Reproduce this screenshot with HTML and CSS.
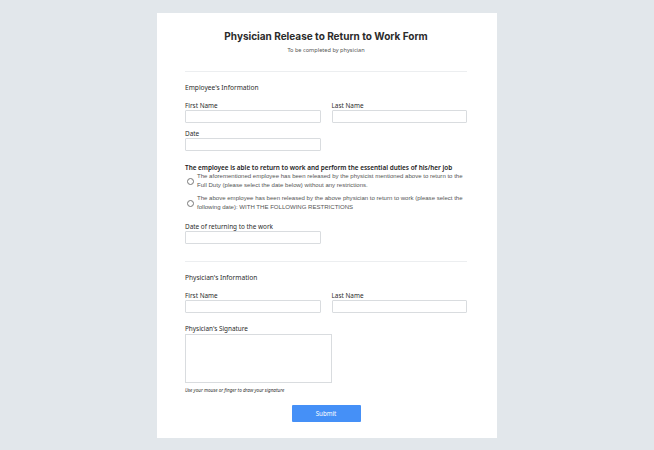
FILE: index.html
```html
<!DOCTYPE html>
<html>
<head>
<meta charset="utf-8">
<link rel="stylesheet" href="styles.css">
</head>
<body>
<div class="card">
  <div class="header">
    <h1 class="title">Physician Release to Return to Work Form</h1>
    <p class="subtitle">To be completed by physician</p>
  </div>
  <hr class="divider">
  <div class="section">
    <div class="section-title">Employee's Information</div>
    <div class="row">
      <div class="field">
        <label class="label">First Name</label>
        <div class="input"></div>
      </div>
      <div class="field">
        <label class="label">Last Name</label>
        <div class="input"></div>
      </div>
    </div>
    <div class="row">
      <div class="field">
        <label class="label">Date</label>
        <div class="input"></div>
      </div>
      <div class="field"></div>
    </div>
    <div class="question">The employee is able to return to work and perform the essential duties of his/her job</div>
    <div class="options">
      <div class="option">
        <span class="radio"></span>
        <span class="option-text">The aforementioned employee has been released by the physicist mentioned above to return to the Full Duty (please select the date below) without any restrictions.</span>
      </div>
      <div class="option">
        <span class="radio"></span>
        <span class="option-text">The above employee has been released by the above physician to return to work (please select the following date): WITH THE FOLLOWING RESTRICTIONS</span>
      </div>
    </div>
    <div class="row return-row">
      <div class="field">
        <label class="label">Date of returning to the work</label>
        <div class="input"></div>
      </div>
      <div class="field"></div>
    </div>
  </div>
  <hr class="divider second">
  <div class="section">
    <div class="section-title">Physician's Information</div>
    <div class="row">
      <div class="field">
        <label class="label">First Name</label>
        <div class="input"></div>
      </div>
      <div class="field">
        <label class="label">Last Name</label>
        <div class="input"></div>
      </div>
    </div>
    <div class="sig-field">
      <label class="label">Physician's Signature</label>
      <div class="sig-box"></div>
      <div class="hint">Use your mouse or finger to draw your signature</div>
    </div>
    <div class="actions">
      <button class="submit">Submit</button>
    </div>
  </div>
</div>
</body>
</html>
```
FILE: styles.css
```css
html, body {
  margin: 0;
  padding: 0;
}
body {
  background: #e2e7eb;
  font-family: "Noto Sans", "Liberation Sans", sans-serif;
  height: 450px;
  overflow: hidden;
}
.card {
  width: 340px;
  margin: 13px 0 0 157px;
  background: #ffffff;
  box-sizing: border-box;
  padding: 16px 30px 17px 28px;
  height: 425px;
}
.header {
  text-align: center;
}
.title {
  font-family: Inter, "Liberation Sans", sans-serif;
  font-weight: 700;
  font-size: 10px;
  color: #2b2b2b;
  margin: 0;
  line-height: 14px;
}
.subtitle {
  margin: 3px 0 0;
  font-size: 5.6px;
  color: #555;
  line-height: 8px;
}
.divider {
  border: 0;
  border-top: 1px solid #eceef0;
  margin: 17px 0 0;
}
.divider.second {
  margin-top: 17px;
}
.section-title {
  font-size: 6.6px;
  color: #2b2b2b;
  margin-top: 11px;
  line-height: 9px;
}
.row {
  display: flex;
  gap: 11px;
  margin-top: 9px;
}
.row + .row {
  margin-top: 6px;
}
.field {
  flex: 1;
  display: flex;
  flex-direction: column;
}
.label {
  font-size: 6.4px;
  color: #2b2b2b;
  line-height: 9px;
  margin-bottom: 0;
}
.input {
  height: 11px;
  border: 1px solid #d9dcdf;
  border-radius: 1px;
  background: #fff;
}
.question {
  margin-top: 12px;
  font-size: 6.4px;
  color: #222;
  font-weight: 600;
  line-height: 9px;
}
.options {
  margin-top: 0;
  display: flex;
  flex-direction: column;
  gap: 4px;
}
.option {
  display: flex;
  align-items: center;
  gap: 3px;
  padding-left: 2px;
}
.radio {
  flex: none;
  width: 5px;
  height: 5px;
  border: 1px solid #777;
  border-radius: 50%;
}
.option-text {
  font-family: "Liberation Sans", Arial, sans-serif;
  font-size: 6.05px;
  line-height: 9px;
  color: #555;
}
.return-row {
  margin-top: 10px;
}
.sig-field {
  margin-top: 11px;
  display: flex;
  flex-direction: column;
}
.sig-box {
  width: 145px;
  height: 47px;
  border: 1px solid #d9dcdf;
  margin-top: 1px;
}
.hint {
  font-size: 4.6px;
  font-style: italic;
  color: #333;
  margin-top: 4px;
  line-height: 7px;
}
.actions {
  display: flex;
  justify-content: center;
  margin-top: 11px;
}
.submit {
  width: 69px;
  height: 17px;
  background: #4590f7;
  border: 0;
  border-radius: 1px;
  color: #fff;
  font-family: "Noto Sans", sans-serif;
  font-size: 6.2px;
  padding: 0;
}
```
